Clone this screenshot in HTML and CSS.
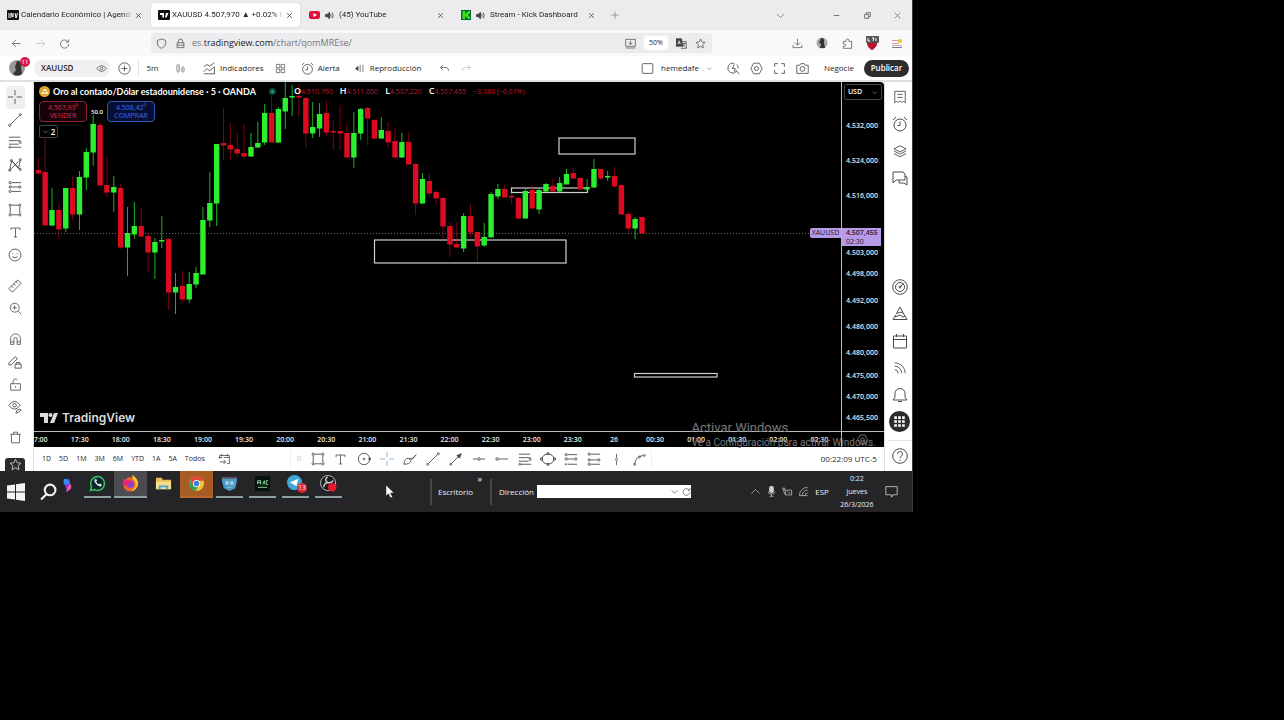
FILE: index.html
```html
<!DOCTYPE html>
<html lang="es">
<head>
<meta charset="utf-8">
<title>XAUUSD 4.507,970 ▲ +0.02%</title>
<link rel="stylesheet" href="styles.css">
</head>
<body>
<svg class="sprite" aria-hidden="true">
  <symbol id="x" viewBox="0 0 16 16"><path d="M4 4l8 8M12 4l-8 8"/></symbol>
  <symbol id="plus" viewBox="0 0 16 16"><path d="M8 3v10M3 8h10"/></symbol>
  <symbol id="down" viewBox="0 0 16 16"><path d="M3 6l5 5 5-5"/></symbol>
  <symbol id="up" viewBox="0 0 16 16"><path d="M2 11l6-6 6 6"/></symbol>
  <symbol id="min" viewBox="0 0 16 16"><path d="M3 8h10"/></symbol>
  <symbol id="restore" viewBox="0 0 16 16"><path d="M3 6h7v7H3zM6 6V3h7v7h-3"/></symbol>
  <symbol id="back" viewBox="0 0 16 16"><path d="M14 8H2M7 3L2 8l5 5"/></symbol>
  <symbol id="fwd" viewBox="0 0 16 16"><path d="M2 8h12M9 3l5 5-5 5"/></symbol>
  <symbol id="reload" viewBox="0 0 16 16"><path d="M13 5.500A6 6 0 1 0 14 9M14 2v4h-4"/></symbol>
  <symbol id="shield" viewBox="0 0 16 16"><path d="M8 1.500l6 2v4c0 4-3 6-6 7.500-3-1.500-6-3.500-6-7.500v-4z"/></symbol>
  <symbol id="lock" viewBox="0 0 16 16"><path d="M3 7h10v7H3zM5 7V4.500a3 3 0 0 1 6 0V7M3 10.500h10"/></symbol>
  <symbol id="sound" viewBox="0 0 16 16"><path class="solid" d="M1 6h3l4-4v12l-4-4H1z"/><path d="M10.500 5v6M13 3q3 5 0 10"/></symbol>
  <symbol id="install" viewBox="0 0 16 16"><path d="M1 2h14v10H1zM1 14.500h14M8 4v5M5.500 7l2.500 2.500L10.500 7"/></symbol>
  <symbol id="translate" viewBox="0 0 16 16"><path class="solid" d="M0 1h8l2 11H0z"/><path class="pale" d="M2.500 9L4.500 4l2 5M3 7.500h3"/><path d="M9 5h6v10H7M9.500 8h5M12 6.500V8c0 3-2 4-3 5M10 9c1 2 3 3 4 4"/></symbol>
  <symbol id="star" viewBox="0 0 16 16"><path d="M8 1.500l2 4.300 4.700.6-3.500 3.200.9 4.700L8 12l-4.100 2.300.9-4.700L1.300 6.400 6 5.800z"/></symbol>
  <symbol id="download" viewBox="0 0 16 16"><path d="M8 1v9M4 6.500l4 4 4-4M1.500 10v4h13v-4"/></symbol>
  <symbol id="puzzle" viewBox="0 0 16 16"><path d="M2 5h4V3.500a2 2 0 0 1 4 0V5h4v10H2v-3h1.500a1.700 1.700 0 0 0 0-3.500H2z"/></symbol>
  <symbol id="eye" viewBox="0 0 16 16"><path d="M1 8q7-8.500 14 0-7 8.500-14 0z"/><circle cx="8" cy="8" r="2"/></symbol>
  <symbol id="circleplus" viewBox="0 0 16 16"><circle cx="8" cy="8" r="7"/><path d="M8 4.500v7M4.500 8h7"/></symbol>
  <symbol id="bars" viewBox="0 0 16 16"><path d="M4.500 1v14M2.500 3h4v9h-4zM11.500 4v11M9.500 7h4v5h-4z"/></symbol>
  <symbol id="indic" viewBox="0 0 16 16"><path d="M1 6l4-3 3 2 6-4M1 14.500h14M1 12l4-4 3 3 6-5v8"/></symbol>
  <symbol id="grid4" viewBox="0 0 16 16"><path d="M2 2h5v5H2zM9 2h5v5H9zM2 9h5v5H2zM9 9h5v5H9z"/></symbol>
  <symbol id="alarm" viewBox="0 0 16 16"><circle cx="8" cy="9" r="6"/><path d="M8 5.500V9.500H5.500M1 4l3-3M15 4l-3-3"/></symbol>
  <symbol id="replay" viewBox="0 0 16 16"><path class="solid" d="M6 5v6L2 8z"/><path d="M9 3v10M13 3v10"/></symbol>
  <symbol id="undo" viewBox="0 0 16 16"><path d="M6 3L2 6.500 6 10M2 6.500h8q4 0 4 5"/></symbol>
  <symbol id="redo" viewBox="0 0 16 16"><path d="M10 3l4 3.500-4 3.500M14 6.500H6q-4 0-4 5"/></symbol>
  <symbol id="square" viewBox="0 0 16 16"><rect x="1.500" y="2" width="13" height="12" rx="1"/></symbol>
  <symbol id="quick" viewBox="0 0 16 16"><path d="M9 2A6 6 0 1 0 12 11M11 10l4 5M9 3L6.500 8H10l-1 4M12 3q2 2 1.500 5"/></symbol>
  <symbol id="hex" viewBox="0 0 16 16"><path d="M4.500 1.500h7L15 8l-3.500 6.500h-7L1 8z"/><circle cx="8" cy="8" r="2.500"/></symbol>
  <symbol id="full" viewBox="0 0 16 16"><path d="M2 6V2h4M10 2h4v4M14 10v4h-4M6 14H2v-4"/></symbol>
  <symbol id="camera" viewBox="0 0 16 16"><path d="M1 4h3.500L6 2h4l1.500 2H15v10H1z"/><circle cx="8" cy="8.500" r="3"/></symbol>
  <symbol id="cross" viewBox="0 0 16 16"><path d="M8 0v6M8 10v6M0 8h6M10 8h6"/></symbol>
  <symbol id="line" viewBox="0 0 16 16"><path d="M3 13L13 3"/><circle cx="2" cy="14" r="1.200"/><circle cx="14" cy="2" r="1.200"/></symbol>
  <symbol id="fib" viewBox="0 0 16 16"><path d="M1 2.500h13M1 6.500h13M1 10.500h11M3 14h12"/><circle cx="14" cy="8.500" r="1.200"/><circle cx="2" cy="14" r="1"/></symbol>
  <symbol id="pattern" viewBox="0 0 16 16"><path d="M2 14L4 3l8 9 2-10M2 14l10-10M4 3l10 10"/><circle cx="4" cy="3" r="1.200"/><circle cx="14" cy="2" r="1.200"/><circle cx="2" cy="14" r="1.200"/><circle cx="14" cy="13" r="1.200"/></symbol>
  <symbol id="forecast" viewBox="0 0 16 16"><path d="M4 3h11M4 8h8M4 13h11"/><circle cx="2.500" cy="3" r="1.300"/><circle cx="2.500" cy="8" r="1.300"/><circle cx="2.500" cy="13" r="1.300"/><circle cx="13.500" cy="8" r="1.300"/></symbol>
  <symbol id="long" viewBox="0 0 16 16"><path d="M4 3h11M4 8h8M4 14h11"/><circle cx="2.500" cy="3" r="1.300"/><circle cx="2.500" cy="8" r="1.300"/><circle cx="13.500" cy="8" r="1.300"/><circle cx="2" cy="14" r=".7"/></symbol>
  <symbol id="short" viewBox="0 0 16 16"><path d="M4 2.500h11M4 9h8M4 14h11"/><circle cx="2.500" cy="2.500" r="1.300"/><circle cx="2.500" cy="9" r="1.300"/><circle cx="13.500" cy="9" r="1.300"/><circle cx="2.500" cy="14" r="1.300"/></symbol>
  <symbol id="rect" viewBox="0 0 16 16"><path d="M4 2.500h8M4 13.500h8M2.500 4v8M13.500 4v8"/><circle cx="2.500" cy="2.500" r="1.300"/><circle cx="13.500" cy="2.500" r="1.300"/><circle cx="2.500" cy="13.500" r="1.300"/><circle cx="13.500" cy="13.500" r="1.300"/></symbol>
  <symbol id="text" viewBox="0 0 16 16"><path d="M2.500 5V2.500h11V5M8 2.500v11M6 13.500h4"/></symbol>
  <symbol id="smile" viewBox="0 0 16 16"><circle cx="8" cy="8" r="6.800"/><path d="M5.500 6v1M10.500 6v1M5 10q3 2.500 6 0"/></symbol>
  <symbol id="ruler" viewBox="0 0 16 16"><path d="M1 11L11 1l4 4L5 15zM4 8l2 2M6.500 5.500l2 2M9 3l2 2"/></symbol>
  <symbol id="zoom" viewBox="0 0 16 16"><circle cx="7" cy="7" r="5.500"/><path d="M11 11l4 4M7 4.500v5M4.500 7h5"/></symbol>
  <symbol id="magnet" viewBox="0 0 16 16"><path d="M2 14V7a6 6 0 0 1 12 0v7h-4V7.500a2 2 0 0 0-4 0V14zM2 11h4M10 11h4"/></symbol>
  <symbol id="penlock" viewBox="0 0 16 16"><path d="M1 9l7-7 3 2-7 7-3 .5zM8 10.500h7V15H8zM9.500 10.500V8.500h4v2"/></symbol>
  <symbol id="unlock" viewBox="0 0 16 16"><path d="M2 7h12v8H2zM5 7V4a3 3 0 0 1 5.500-1.500M8 10v2"/></symbol>
  <symbol id="eyepen" viewBox="0 0 16 16"><path d="M1 6q6.500-9 13 0-6.500 9-13 0z"/><circle cx="7.500" cy="6" r="2"/><path d="M9 15l1-3 3-1.500 2 1-3 2.500z"/></symbol>
  <symbol id="trash" viewBox="0 0 16 16"><path d="M1.500 4h13M3 4v10.500h10V4M5.500 4V1.500h5V4"/></symbol>
  <symbol id="watch" viewBox="0 0 16 16"><path d="M2 1.500h12v13l-2-2-2 2-2-2-2 2-2-2-2 2zM5 5h6M5 8.500h6"/></symbol>
  <symbol id="layers" viewBox="0 0 16 16"><path d="M8 2l7 3.500L8 9 1 5.500zM1 8l7 3.500L15 8M1 11l7 3.500 7-3.500"/></symbol>
  <symbol id="chat" viewBox="0 0 16 16"><path d="M1 13V2h10l2 2v6H4zM13 6l2 1v8l-3-2H7v-3"/></symbol>
  <symbol id="target" viewBox="0 0 16 16"><circle cx="8" cy="8" r="7.300"/><circle cx="8" cy="8" r="4.500"/><path d="M8 8l3.500-3.500"/><circle cx="8" cy="8" r="1"/></symbol>
  <symbol id="tree" viewBox="0 0 16 16"><path d="M8 1l3.500 6.500L9 6 4.500 7.500zM4 8.500L1 13.500h14l-3.500-6M3 11l5-2 3 2 2-1"/></symbol>
  <symbol id="cal" viewBox="0 0 16 16"><path d="M1.500 3h13v12h-13zM1.500 6.500h13M4.500 1v3M11.500 1v3"/></symbol>
  <symbol id="rss" viewBox="0 0 16 16"><path d="M2 2a12 12 0 0 1 12 12M2 6a8 8 0 0 1 8 8M2 10a4 4 0 0 1 4 4"/></symbol>
  <symbol id="bell" viewBox="0 0 16 16"><path d="M1 13h14l-2-3V6.500a5 5 0 0 0-10 0V10zM6 14.500h4"/></symbol>
  <symbol id="apps" viewBox="0 0 16 16"><circle class="solid" cx="8" cy="8" r="7.500"/><path class="dots" d="M4 4h2v2H4zM7 4h2v2H7zM10 4h2v2h-2zM4 7h2v2H4zM7 7h2v2H7zM10 7h2v2h-2zM4 10h2v2H4zM7 10h2v2H7zM10 10h2v2h-2z"/></symbol>
  <symbol id="help" viewBox="0 0 16 16"><circle cx="8" cy="8" r="7.300"/><path d="M5.500 6a2.500 2.500 0 1 1 3.500 2.300q-1 .5-1 1.700M8 11.500v1.300"/></symbol>
  <symbol id="goto" viewBox="0 0 16 16"><path d="M2 7V3h12v10h-3M1 5.500h4M7 5.500h7M4.500 1v3M11.500 1v3M2 11h7M7 8.500L9.500 11 7 13.500"/></symbol>
  <symbol id="circ" viewBox="0 0 16 16"><circle cx="8" cy="8" r="6.500"/><circle cx="8" cy="8" r="1"/><circle cx="14.500" cy="8" r="1.200"/></symbol>
  <symbol id="brush" viewBox="0 0 16 16"><path d="M1 14q1-7 5-7l3 3q-1 4-8 4zM7 7l4 1 4-5M9 9l6-6"/></symbol>
  <symbol id="arrow" viewBox="0 0 16 16"><path d="M2 14L12 4"/><path class="solid" d="M14 2l-2 5-3-3z"/><circle cx="2" cy="14" r="1"/></symbol>
  <symbol id="hline" viewBox="0 0 16 16"><path d="M1 8h5M10 8h5"/><circle cx="8" cy="8" r="1.500"/></symbol>
  <symbol id="hray" viewBox="0 0 16 16"><path d="M4 8h11"/><circle cx="2.500" cy="8" r="1.500"/></symbol>
  <symbol id="ellipse" viewBox="0 0 16 16"><ellipse cx="8" cy="8" rx="6" ry="5"/><circle cx="1.500" cy="8" r="1.200"/><circle cx="14.500" cy="8" r="1.200"/><circle cx="8" cy="2.500" r="1"/><circle cx="8" cy="13.500" r="1"/></symbol>
  <symbol id="vline" viewBox="0 0 16 16"><path d="M8 1v5M8 10v5"/><circle cx="8" cy="8" r="1.300"/></symbol>
  <symbol id="curve" viewBox="0 0 16 16"><path d="M2 14Q3 4 13 3"/><circle cx="2" cy="14" r="1.200"/><circle cx="8" cy="5" r="1.200"/><circle cx="14" cy="3" r="1.200"/></symbol>
</svg>

<div class="screen">
  <header class="tabs">
    <div class="tab"><svg class="fav" viewBox="0 0 12 10"><rect width="12" height="10" rx="1" fill="#111"/><path d="M2 3v5M4 8V3l2 4V3M8 3l1 5 1.500-5" stroke="#fff" fill="none"/></svg><span class="title">Calendario Económico | Agenda</span><button aria-label="Cerrar"><svg class="i s"><use href="#x"/></svg></button></div>
    <div class="tab active"><svg class="fav" viewBox="0 0 12 10"><rect width="12" height="10" rx="1" fill="#111"/><path d="M2 3h4v4.500H4.300V5H2zM8 3h2.500L8.500 7.500H7z" fill="#fff"/></svg><span class="title">XAUUSD 4.507,970 ▲ +0.02% h</span><button aria-label="Cerrar"><svg class="i s"><use href="#x"/></svg></button></div>
    <div class="tab"><svg class="fav" viewBox="0 0 12 10"><rect y="1" width="11" height="8" rx="2" fill="#e0103c"/><path d="M4.500 3v4L8 5z" fill="#fff"/></svg><svg class="i s"><use href="#sound"/></svg><span class="title">(45) YouTube</span><button aria-label="Cerrar"><svg class="i s"><use href="#x"/></svg></button></div>
    <div class="tab"><svg class="fav" viewBox="0 0 12 10"><rect x="1" width="10" height="10" fill="#063"/><path d="M2.500 1H5v2.500h1.500V2H8V1h2v2.500H8.500v3H10V9H8V8H6.500V6.500H5V9H2.500z" fill="#3ee21c"/></svg><svg class="i s"><use href="#sound"/></svg><span class="title">Stream - Kick Dashboard</span><button aria-label="Cerrar"><svg class="i s"><use href="#x"/></svg></button></div>
    <button class="newtab" aria-label="Nueva pestaña"><svg class="i"><use href="#plus"/></svg></button>
    <div class="window">
      <button class="list" aria-label="Lista de pestañas"><svg class="i m"><use href="#down"/></svg></button>
      <button aria-label="Minimizar"><svg class="i s"><use href="#min"/></svg></button>
      <button aria-label="Restaurar"><svg class="i s"><use href="#restore"/></svg></button>
      <button aria-label="Cerrar ventana"><svg class="i m"><use href="#x"/></svg></button>
    </div>
  </header>

  <nav class="nav">
    <div class="navleft">
      <button aria-label="Atrás"><svg class="i m"><use href="#back"/></svg></button>
      <button class="off" aria-label="Adelante"><svg class="i m"><use href="#fwd"/></svg></button>
      <button aria-label="Recargar"><svg class="i m"><use href="#reload"/></svg></button>
    </div>
    <div class="url">
      <svg class="i m"><use href="#shield"/></svg><svg class="i m"><use href="#lock"/></svg>
      <a class="address" href="#">es.<b>tradingview.com</b>/chart/qomMREse/</a>
      <svg class="i m"><use href="#install"/></svg><button class="percent">50%</button><svg class="i m"><use href="#translate"/></svg><svg class="i m"><use href="#star"/></svg>
    </div>
    <div class="navright">
      <button aria-label="Descargas"><svg class="i m"><use href="#download"/></svg></button>
      <button aria-label="Cuenta"><svg class="pic" viewBox="0 0 12 12"><circle cx="6" cy="6" r="5.500" fill="#aaa"/><path d="M5 1q4 0 3 5l1 5H4l1-4-2-1z" fill="#333"/></svg></button>
      <button aria-label="Extensiones"><svg class="i m"><use href="#puzzle"/></svg></button>
      <button aria-label="Bloqueador"><svg class="pic wide" viewBox="0 0 14 14"><path d="M2 3h10v5q-1 4-5 6-4-2-5-6z" fill="#b5122c"/><rect x="1" width="13" height="7" rx="1" fill="#555"/><path d="M3 2v3h2M7 2h2L8 5M11 2v3" stroke="#fff" fill="none"/></svg></button>
      <button aria-label="Menú"><svg class="pic" viewBox="0 0 12 12"><path d="M1 3.500h6M1 6.500h7" stroke="#d99" /><path d="M1 10.500h10" stroke="#77a"/><path d="M1 8.500h10" stroke="#ca8"/><circle cx="9" cy="4" r="2" fill="#f1bd2b"/></svg></button>
    </div>
  </nav>

  <div class="toolbar">
    <button class="avatar" aria-label="Perfil"><svg viewBox="0 0 16 16"><circle cx="8" cy="8" r="8" fill="#9a9a9a"/><path d="M8 1q5 0 4 6l1 7q-5 3-9 0l3-4-1-3z" fill="#333"/></svg><span class="badge">11</span></button>
    <div class="symbol"><button>XAUUSD</button><svg class="i m"><use href="#eye"/></svg></div>
    <button class="w28" aria-label="Comparar"><svg class="i l"><use href="#circleplus"/></svg></button>
    <button class="w28 ruled">5m</button>
    <button class="w28 faint" aria-label="Velas"><svg class="i m"><use href="#bars"/></svg></button>
    <button class="indicators"><svg class="i l"><use href="#indic"/></svg>Indicadores</button>
    <button aria-label="Plantillas"><svg class="i m"><use href="#grid4"/></svg></button>
    <button class="alert"><svg class="i l"><use href="#alarm"/></svg>Alerta</button>
    <button class="replay"><svg class="i m"><use href="#replay"/></svg>Reproducción</button>
    <button class="undo" aria-label="Deshacer"><svg class="i m"><use href="#undo"/></svg></button>
    <button class="undo off" aria-label="Rehacer"><svg class="i m"><use href="#redo"/></svg></button>
    <div class="toolright">
      <button class="layout"><svg class="i l"><use href="#square"/></svg>hemedafe<svg class="i xs"><use href="#down"/></svg></button>
      <button class="w23" aria-label="Buscar"><svg class="i l"><use href="#quick"/></svg></button>
      <button class="w23" aria-label="Ajustes"><svg class="i l"><use href="#hex"/></svg></button>
      <button class="w23" aria-label="Pantalla completa"><svg class="i l"><use href="#full"/></svg></button>
      <button class="w23" aria-label="Captura"><svg class="i l"><use href="#camera"/></svg></button>
      <button class="trade">Negocie</button>
      <button class="publish">Publicar</button>
    </div>
  </div>

  <main class="workspace">
    <aside class="rail left">
      <div class="set eight">
        <button class="on" aria-label="Cruz"><svg class="i xl"><use href="#cross"/></svg></button>
        <button aria-label="Línea"><svg class="i xl"><use href="#line"/></svg></button>
        <button aria-label="Fibonacci"><svg class="i xl"><use href="#fib"/></svg></button>
        <button aria-label="Patrones"><svg class="i xl"><use href="#pattern"/></svg></button>
        <button aria-label="Predicción"><svg class="i xl"><use href="#forecast"/></svg></button>
        <button aria-label="Formas"><svg class="i xl"><use href="#rect"/></svg></button>
        <button aria-label="Texto"><svg class="i l"><use href="#text"/></svg></button>
        <button aria-label="Iconos"><svg class="i xl"><use href="#smile"/></svg></button>
      </div>
      <div class="set two">
        <button aria-label="Medir"><svg class="i xl"><use href="#ruler"/></svg></button>
        <button aria-label="Acercar"><svg class="i l"><use href="#zoom"/></svg></button>
      </div>
      <div class="set four">
        <button aria-label="Imán"><svg class="i l"><use href="#magnet"/></svg></button>
        <button aria-label="Modo dibujo"><svg class="i xl"><use href="#penlock"/></svg></button>
        <button aria-label="Bloquear"><svg class="i l"><use href="#unlock"/></svg></button>
        <button aria-label="Ocultar"><svg class="i xl"><use href="#eyepen"/></svg></button>
      </div>
      <div class="set one"><button aria-label="Eliminar"><svg class="i l"><use href="#trash"/></svg></button></div>
      <button class="favs" aria-label="Favoritos"><svg class="i l"><use href="#star"/></svg></button>
    </aside>

    <section class="center">
      <div class="chart">
        <div class="plot">
          <svg id="plot" role="img" aria-label="Gráfico de velas XAUUSD"></svg>
          <div class="legend">
            <svg class="gold" viewBox="0 0 12 12"><circle cx="6" cy="6" r="6" fill="#e0a52c"/><path d="M2.500 8.500l1-2h2l1 2zM6.500 8.500l1-2h2l1 2zM4.500 5.500l1-2h2l1 2z" fill="#fff"/></svg>
            <h1>Oro al contado/Dólar estadounidense · 5 · OANDA</h1><span class="live"></span>
            <span class="ohlc"><span><b>O</b>4.510,760</span><span><b>H</b>4.511,050</span><span><b>L</b>4.507,220</span><span><b>C</b>4.507,455</span><span>−3,380 (−0,07%)</span></span>
          </div>
          <div class="deal">
            <button class="sell">4.507,93⁰<br>VENDER</button><span>50.0</span><button class="buy">4.508,42⁰<br>COMPRAR</button>
          </div>
          <button class="collapse"><svg class="i xs"><use href="#down"/></svg>2</button>
          <div class="brand"><svg viewBox="0 0 18 10"><path d="M0 0h8v10H4V4H0zM14 0h4l-4 10h-4z"/><circle cx="10.500" cy="2" r="2"/></svg>TradingView</div>
          <span class="ticker">XAUUSD</span>
        </div>
        <div class="scale">
          <svg id="scale"></svg>
          <button class="currency">USD<svg class="i xs"><use href="#down"/></svg></button>
          <div class="last">4.507,455<br><span>02:30</span></div>
        </div>
        <div class="times" id="times"></div>
        <button class="gear" aria-label="Ajustes de escala"><svg class="i m"><use href="#hex"/></svg></button>
      </div>
      <div class="ranges">
        <div class="periods"><button>1D</button><button>5D</button><button>1M</button><button>3M</button><button>6M</button><button>YTD</button><button>1A</button><button>5A</button><button>Todos</button><button class="go" aria-label="Ir a"><svg class="i l"><use href="#goto"/></svg></button></div>
        <div class="drawings">
          <span class="grip">⠿</span>
          <button aria-label="Rectángulo"><svg class="i xl"><use href="#rect"/></svg></button><button aria-label="Texto"><svg class="i l"><use href="#text"/></svg></button><button aria-label="Círculo"><svg class="i xl"><use href="#circ"/></svg></button><button class="blue" aria-label="Cruz"><svg class="i xl"><use href="#cross"/></svg></button><button aria-label="Pincel"><svg class="i xl"><use href="#brush"/></svg></button><button aria-label="Línea"><svg class="i xl"><use href="#line"/></svg></button><button aria-label="Flecha"><svg class="i xl"><use href="#arrow"/></svg></button><button aria-label="Línea horizontal"><svg class="i xl"><use href="#hline"/></svg></button><button aria-label="Rayo horizontal"><svg class="i xl"><use href="#hray"/></svg></button><button aria-label="Fibonacci"><svg class="i xl"><use href="#fib"/></svg></button><button aria-label="Elipse"><svg class="i xxl"><use href="#ellipse"/></svg></button><button aria-label="Posición larga"><svg class="i xl"><use href="#long"/></svg></button><button aria-label="Posición corta"><svg class="i xl"><use href="#short"/></svg></button><button aria-label="Línea vertical"><svg class="i l"><use href="#vline"/></svg></button><button aria-label="Curva"><svg class="i l"><use href="#curve"/></svg></button>
        </div>
        <span class="utc">00:22:09 UTC-5</span>
      </div>
      <div class="activate"><p>Activar Windows</p><p class="hint">Ve a Configuración para activar Windows.</p></div>
    </section>

    <aside class="rail right">
      <div class="wset">
        <button aria-label="Lista"><svg class="i xl"><use href="#watch"/></svg></button>
        <button aria-label="Alertas"><svg class="i xxl"><use href="#alarm"/></svg></button>
        <button aria-label="Capas"><svg class="i xl"><use href="#layers"/></svg></button>
        <button aria-label="Chats"><svg class="i xxl"><use href="#chat"/></svg></button>
      </div>
      <div class="wset low">
        <button aria-label="Filtros"><svg class="i xxl"><use href="#target"/></svg></button>
        <button aria-label="Pine"><svg class="i xxl"><use href="#tree"/></svg></button>
        <button aria-label="Calendario"><svg class="i xxl"><use href="#cal"/></svg></button>
        <button aria-label="Noticias"><svg class="i xl"><use href="#rss"/></svg></button>
        <button aria-label="Avisos"><svg class="i xxl"><use href="#bell"/></svg></button>
        <button aria-label="Productos"><svg class="i huge"><use href="#apps"/></svg></button>
      </div>
      <div class="wset foot"><button aria-label="Ayuda"><svg class="i xxl"><use href="#help"/></svg></button></div>
    </aside>
  </main>

  <footer class="taskbar">
    <button class="start" aria-label="Inicio"><svg viewBox="0 0 18 18"><path d="M0 2.500L8 1.500V8.500H0zM9 1.300L18 0v8.500H9zM0 9.500h8v7L0 15.500zM9 9.500h9V18l-9-1.300z" fill="#f4f4f4"/></svg></button>
    <button class="find" aria-label="Buscar"><svg viewBox="0 0 16 16"><circle cx="9.500" cy="6.500" r="5" /><path d="M6 10.500L1 15.500"/></svg></button>
    <svg class="copilot" viewBox="0 0 12 16"><path d="M2 1h5q2 1 2 5l1 5-5 4Q5 9 2 6z" fill="#7a3be0"/><path d="M2 1h4l2 5-5 1Q1 4 2 1z" fill="#2a90f0"/><path d="M8 6q4 2 1 6l-4 3q0-5 3-9z" fill="#e8569a"/></svg>
    <div class="apps">
      <button aria-label="WhatsApp"><svg viewBox="0 0 18 18"><path d="M1.500 16.500l1.200-4A7.300 7.300 0 1 1 5.800 15.500z" fill="#123" stroke="#35c564" stroke-width="1.600"/><path d="M6 5q-1 2 2 5t5 2l.5-2-2-1-1 1q-2-1-3-3l1-1-1-2z" fill="#d7f5df"/></svg></button>
      <button class="lit" aria-label="Firefox"><svg viewBox="0 0 18 18"><path d="M2 4q1 1 2 1 2-3 5-3l2 2q1-2 0-4 6 4 6 9a8 8 0 0 1-16 1Q1 7 2 4z" fill="#f0622b"/><path d="M11 0q6 4 6 9a8 8 0 0 1-8 8q7-4 5-9-1-3-3-4z" fill="#fcc42d"/><circle cx="8.500" cy="9.500" r="4" fill="#8a3fd4"/><path d="M2 4q1 1 2 1l5 1 1 2-4 2q-4 1-5 3Q0 8 2 4z" fill="#e5276f"/></svg></button>
      <button class="idle" aria-label="Explorador"><svg viewBox="0 0 18 18"><path d="M1 3h6l1 2h9v10H1z" fill="#eabf52"/><path d="M1 7h16v8H1z" fill="#f8dd8a"/><path d="M4 11h10v4h-2v-2H6v2H4z" fill="#48a5dc"/></svg></button>
      <button class="hot" aria-label="Chrome"><svg viewBox="0 0 18 18"><circle cx="9" cy="9" r="8" fill="#f3c336"/><path d="M2 5a8 8 0 0 1 14.500 1H9L5.500 11z" fill="#e14a38"/><path d="M2 5l4 7 4 1-2 4A8 8 0 0 1 2 5z" fill="#36a052"/><circle cx="9" cy="9" r="3.800" fill="#fff"/><circle cx="9" cy="9" r="3" fill="#397fe2"/></svg></button>
      <button aria-label="Bot"><svg viewBox="0 0 18 18"><path d="M1 2h16v4l-2 8-6 3-6-3L1 6z" fill="#4f9ac3"/><path d="M1 2h16v2H1z" fill="#556"/><path d="M5 7h3v3H5zM10 7h3v3h-3zM6 13h6" fill="#8fcdea" stroke="#bfe6f7" stroke-width=".5"/></svg></button>
      <button aria-label="Consola"><svg viewBox="0 0 18 18"><path d="M1 1h16v16H1z" fill="#07120b"/><path d="M4 10V6h3v4M4 8h3M9 10l2-4v4M15 6h-2v4h2M4 13h10" stroke="#8fd8a0" fill="none"/></svg></button>
      <button aria-label="Telegram"><svg viewBox="0 0 18 18"><circle cx="8" cy="8" r="8" fill="#3fa6dc"/><path d="M3 8l9-4-2 8-3-2z" fill="#fff"/></svg><span class="count">13</span></button>
      <button aria-label="OBS"><svg viewBox="0 0 18 18"><circle cx="8.500" cy="8.500" r="8" fill="#1c1c1e" stroke="#bbb"/><path d="M8 2q-4 3 0 6 4 1 6-2M8 8q-4 1-4 5" stroke="#ccc" stroke-width="1.500" fill="none"/><circle cx="13" cy="13" r="4.500" fill="#e5182c"/></svg></button>
    </div>
    <svg class="pointer" viewBox="0 0 8 14"><path d="M0 0v11l2.500-2.200L4.500 13l2-1-2-4H8z" fill="#fff" stroke="#222" stroke-width=".5"/></svg>
    <div class="desk"><span>Escritorio</span><sup>»</sup></div>
    <div class="dir"><label for="dir">Dirección</label><span class="field"><input id="dir" type="text"><svg class="i s"><use href="#down"/></svg><svg class="i s"><use href="#reload"/></svg></span></div>
    <div class="tray">
      <svg class="i m"><use href="#up"/></svg>
      <svg class="i m" viewBox="0 0 16 16"><rect class="solid" x="5" y="0" width="6" height="10" rx="3"/><path d="M3 8q0 4 5 4t5-4M8 12v3M5 15h6"/></svg>
      <svg class="i m" viewBox="0 0 16 16"><path d="M5 6h9v7H5zM1 3l3 9M1 3h3v4M8 8l4 3"/></svg>
      <svg class="i m" viewBox="0 0 16 16"><path d="M2 14A12 12 0 0 1 14 2M6 14a8 8 0 0 1 8-8M10 14a4 4 0 0 1 4-4M2 14h12"/></svg>
      <span class="lang">ESP</span>
      <time class="clock">0:22<br>jueves<br>26/3/2026</time>
      <svg class="i l" viewBox="0 0 16 16"><path d="M1 2h14v10h-5l-2 3v-3H1z"/></svg>
    </div>
  </footer>
</div>
<script src="chart.js"></script>
</body>
</html>
```
FILE: styles.css
```css
* { box-sizing: border-box; }
body { margin: 0; background: #000; font: 8px/12px "Open Sans", "Noto Sans", sans-serif; color: #26262a; }
button { border: 0; padding: 0; margin: 0; background: none; color: inherit; font: inherit; display: flex; align-items: center; justify-content: center; white-space: nowrap; }
p, h1 { margin: 0; }
.sprite { position: absolute; width: 0; height: 0; }
.screen { width: 71.1%; border-right: 1px solid #3a3a3c; position: relative; }

.i { width: 12px; height: 12px; flex: none; fill: none; stroke: currentColor; stroke-width: 1; opacity: .85; }
.i.xs { width: 7px; height: 7px; }
.i.s { width: 9px; height: 9px; stroke-width: 1.5; }
.i.m { width: 11px; height: 11px; }
.i.l { width: 13px; height: 13px; }
.i.xl { width: 14px; height: 14px; }
.i.xxl { width: 16px; height: 16px; }
.i.huge { width: 21px; height: 21px; opacity: 1; }
.solid { fill: currentColor; }
.pale { stroke: #fff; }
.dots { fill: #fff; stroke: none; }

.tabs { display: flex; align-items: center; height: 30px; background: #ececee; font-family: Roboto, "Open Sans", sans-serif; }
.tab { display: flex; align-items: center; gap: 2px; flex: 0 1 149px; height: 24px; margin: 0 2px 0 0; padding: 0 6px 0 7px; min-width: 0; border-radius: 4px; }
.tab.active { background: #fff; box-shadow: 0 0 2px #ccc; }
.fav { width: 12px; height: 10px; flex: none; }
.fav + .i { margin: 0 3px 0 2px; }
.title { flex: 1; overflow: hidden; white-space: nowrap; mask-image: linear-gradient(90deg, #000 92%, transparent); }
.newtab { width: 22px; color: #777; }
.window { display: flex; margin-left: auto; color: #444; }
.window button { width: 31px; }
.window .list { margin-right: 25px; }
.window button:last-child { width: 29px; }

.nav { display: flex; align-items: center; height: 26px; background: #f9f9fb; }
.navleft { display: flex; flex: 0 0 151px; padding-left: 4px; }
.navleft button { width: 24px; }
.off { color: #aaa; }
.url { flex: 1 1 560px; display: flex; align-items: center; gap: 8px; height: 20px; padding: 0 6px 0 5px; background: #ececee; border-radius: 4px; }
.address { flex: 1; color: #77777b; text-decoration: none; font-size: 9px; margin-left: -2px; }
.address b { color: #222; font-weight: 500; }
.percent { background: #fff; border-radius: 3px; width: 24px; height: 14px; font-size: 7px; }
.navright { display: flex; flex: none; margin-left: 73px; padding-right: 2px; }
.navright button { width: 25px; }
.pic { width: 12px; height: 12px; }
.pic.wide { width: 14px; height: 14px; }

.toolbar { display: flex; align-items: center; height: 26px; background: #fff; border-bottom: 2px solid #dfe0e3; font-weight: 500; }
.avatar { width: 34px; position: relative; }
.avatar svg { width: 16px; height: 16px; }
.badge { position: absolute; left: 20px; top: -3px; width: 10px; height: 10px; border-radius: 5px; background: #d81b45; color: #fff; font-size: 6px; line-height: 10px; text-align: center; }
.symbol { display: flex; align-items: center; justify-content: space-between; width: 76px; height: 17px; padding: 0 3px 0 7px; border-radius: 8px; background: #f0f0f2; font-weight: 600; }
.w28 { width: 28px; height: 16px; }
.faint { color: #77777b; }
.ruled { border-left: 1px solid #e3e3e6; }
.indicators { gap: 4px; margin: 0 11px 0 9px; }
.alert { gap: 4px; margin: 0 14px 0 15px; }
.replay { gap: 5px; margin-right: 12px; }
.undo { width: 22px; }
.toolright { display: flex; align-items: center; margin-left: auto; padding-right: 3px; }
.layout { gap: 7px; margin-right: 9px; }
.w23 { width: 23px; }
.trade { width: 50px; }
.publish { width: 45px; height: 17px; border-radius: 9px; background: #2d2d30; color: #fff; font-weight: 600; }

.workspace { display: flex; background: #fff; }
.rail { display: flex; flex-direction: column; flex: none; color: #2c2c30; }
.left { width: 34px; padding-top: 4px; padding-right: 3px; border-right: 1px solid #ddd; }
.set { display: flex; flex-direction: column; align-items: center; }
.set button { flex: 1; width: 19px; border-radius: 3px; }
.set .on { background: #efeff1; }
.eight { height: 180px; }
.two { height: 45px; margin-top: 9px; }
.four { height: 90px; margin-top: 8px; }
.one { height: 23px; margin-top: 8px; }
.favs { height: 13px; width: 20px; margin: 9px auto 0; border-radius: 3px 3px 0 0; background: #2b2b2e; color: #fff; align-items: flex-start; overflow: hidden; }
.right { width: 28px; padding: 1px 0 0 3px; border-left: 1px solid #ddd; }
.wset { display: flex; flex-direction: column; }
.wset button { height: 27px; }
.low { margin-top: auto; }
.foot { margin-top: 5px; padding: 1px 0 2px; border-top: 1px solid #e3e3e6; }

.center { flex: 1; min-width: 0; position: relative; }
.chart { display: grid; grid-template-columns: 1fr 43px; background: #000; color: #fff; border-radius: 0 4px 0 0; overflow: hidden; }
.plot, .scale { position: relative; height: 349px; overflow: hidden; }
.scale { border-left: 1px solid #bbb; }
.plot > svg:first-child, .scale > svg { display: block; width: 100%; height: 349px; }
.scale text { fill: #e4e4e4; font-size: 7px; font-weight: 600; text-anchor: middle; }
.green { fill: #2bef2f; }
.red { fill: #dc0b22; }
.wick.green { opacity: .75; }
.wick.red { opacity: .55; }
.zone { fill: none; stroke: #d0d0d0; stroke-width: 1.2; }
.level { stroke: #666; stroke-dasharray: 1 2; }
.legend { position: absolute; left: 5px; top: 3px; display: flex; align-items: center; white-space: nowrap; }
.gold { width: 11px; height: 11px; margin-right: 3px; }
.legend h1 { font: 700 9px/12px Lato, "Open Sans", sans-serif; }
.live { width: 7px; height: 7px; border: 2px solid #0c4a3c; border-radius: 4px; background: #2aa187; margin: 0 18px 0 13px; }
.ohlc { display: flex; align-items: baseline; gap: 7px; color: #c4142a; font-size: 7px; }
.ohlc b { color: #fff; font-size: 9px; font-weight: 600; }
.deal { position: absolute; left: 5px; top: 19px; display: flex; align-items: center; gap: 4px; font-size: 6px; font-weight: 600; }
.deal button { width: 48px; height: 21px; border: 1px solid; border-radius: 4px; font-size: 7px; line-height: 8px; font-weight: 400; }
.deal .sell { color: #e02743; border-color: #8d2335; background: #16040a; }
.deal .buy { color: #4268f0; border-color: #3455b5; background: #071033; }
.collapse { position: absolute; left: 5px; top: 43px; width: 19px; height: 13px; gap: 2px; border: 1px solid #444; border-radius: 2px; font-weight: 600; }
.brand { position: absolute; left: 6px; bottom: 5px; display: flex; align-items: center; gap: 4px; color: #dcdcdc; font: 600 12px/16px Inter, "Open Sans", sans-serif; }
.brand svg { width: 18px; height: 10px; fill: currentColor; }
.ticker { position: absolute; right: 0; top: 146px; width: 31px; height: 10px; background: #b79be6; color: #22143c; font-size: 7px; line-height: 10px; text-align: center; border-radius: 2px 0 0 2px; }
.currency { position: absolute; left: 2px; top: 2px; width: 38px; height: 16px; padding: 0 3px; justify-content: space-between; border: 1px solid #444; border-radius: 2px; font-size: 7px; font-weight: 600; }
.last { position: absolute; left: 0; top: 146px; width: 39px; height: 18px; padding-left: 4px; background: #b79be6; color: #22143c; font-size: 7px; line-height: 9px; font-weight: 600; }
.last span { font-weight: 400; }
.times { display: flex; justify-content: flex-end; overflow: hidden; height: 16px; padding-right: 1px; border-top: 1px solid #bbb; }
.times span { flex: 0 0 5.1%; text-align: center; font-size: 7px; line-height: 15px; font-weight: 600; color: #e8e8e8; }
.gear { border-top: 1px solid #bbb; border-left: 1px solid #bbb; color: #bbb; }

.ranges { display: flex; align-items: center; height: 24px; font-weight: 500; }
.periods { display: flex; gap: 8px; flex: 0 0 256px; padding-left: 8px; font-size: 7px; }
.go { margin-left: 5px; }
.drawings { display: flex; align-items: center; border-left: 1px solid #eee; border-right: 1px solid #eee; height: 18px; color: #2c2c30; }
.drawings button { width: 23px; }
.drawings .blue { color: #6f9dbb; }
.grip { width: 15px; text-align: center; color: #ccc; }
.utc { margin-left: auto; padding-right: 7px; white-space: nowrap; }
.activate { position: absolute; right: 8px; top: 337px; color: #79797c; white-space: nowrap; pointer-events: none; font-family: Roboto, "Open Sans", sans-serif; }
.activate p { font-size: 13px; line-height: 17px; }
.activate .hint { font-size: 10px; line-height: 13px; }

.taskbar { position: relative; display: flex; align-items: center; height: 41px; background: #252528; color: #eee; }
.start { margin-left: 7px; }
.start svg { width: 18px; height: 18px; }
.find { margin-left: 15px; }
.find svg { width: 17px; height: 17px; fill: none; stroke: #f2f2f2; stroke-width: 2; }
.copilot { width: 11px; height: 15px; margin: 0 8px 12px 5px; }
.apps { display: flex; align-self: flex-start; }
.apps button { width: 33px; height: 27px; position: relative; border-bottom: 2px solid #8ba0a3; }
.apps button:not(.lit):not(.hot) { width: 27px; margin: 0 3px; }
.apps svg { width: 17px; height: 17px; }
.apps .idle { border-color: transparent; }
.apps .lit { background: #4b4b50; }
.apps .hot { background: #a75c23; border-color: #b9672a; }
.count { position: absolute; right: 2px; bottom: 3px; width: 10px; height: 10px; border-radius: 5px; background: #dd2738; font-size: 7px; line-height: 10px; text-align: center; }
.pointer { position: absolute; left: 386px; top: 14px; width: 8px; height: 14px; }
.desk { display: flex; align-items: center; justify-content: space-between; height: 26px; width: 62px; margin-left: 85px; padding: 0 8px 0 6px; border-left: 2px solid #47474b; border-right: 2px solid #47474b; }
.desk sup { align-self: flex-start; line-height: 0; font-size: 9px; }
.dir { display: flex; align-items: center; gap: 3px; padding-left: 7px; }
.field { display: flex; align-items: center; height: 13px; width: 154px; background: #fff; color: #555; gap: 3px; }
.field input { flex: 1; min-width: 0; border: 0; padding: 0; height: 11px; background: none; font: inherit; }
.tray { display: flex; align-items: center; gap: 5px; margin-left: auto; padding-right: 14px; font-size: 7px; }
.lang { font-size: 8px; margin-left: 1px; }
.clock { width: 46px; line-height: 13px; text-align: center; }
```
FILE: chart.js
```js
const NS = "http://www.w3.org/2000/svg";
const LEFT = 34, TOP = 82;

// colour, high, open/close top, open/close bottom, low
const candles = `r158,170,173,174 r137,172,225,225 g188,210,225,226 r203,210,229,239 g188,188,228,232 r177,188,214,220
g171,177,214,230 g148,152,177,190 g115,124,152,166 r123,125,185,186 r157,185,192,197 g176,187,192,212
r184,188,247,249 g207,233,247,276 g202,226,234,239 r208,226,236,237 r233,236,252,272 g238,242,252,279
g216,240,241,248 r238,239,292,310 g273,287,292,314 r271,286,299,302 g272,284,299,303 g267,273,284,288
g207,220,274,274 g172,203,220,227 g144,144,203,226 r108,143,145,160 r123,145,149,160 r132,149,153,157
r124,153,156,159 g133,147,156,157 g122,143,147,148 g104,113,142,145 r96,113,142,142 g107,109,142,143
g82,98,111,129 g85,96,97,116 r84,96,97,117 r97,98,133,147 g102,127,133,138 g103,114,128,137
r101,113,132,137 r120,131,132,150 r105,131,133,150 r123,133,157,158 g112,133,157,168 g108,109,133,140
r107,108,118,145 r119,120,138,139 g117,130,138,139 r122,131,142,148 r128,141,157,158 g133,142,157,158
r132,142,164,165 r163,164,203,215 g173,179,203,204 r174,181,193,197 r190,192,198,205 r197,198,226,238
r222,226,244,257 r222,244,247,248 g213,216,248,252 r204,216,232,237 r231,232,246,262 g223,237,245,247
g192,194,237,237 g184,189,196,199 r185,189,197,197 r193,196,197,204 r197,198,218,219 g188,191,218,219
r185,190,208,209 g188,190,209,214 g183,184,191,192 r179,186,191,191 g177,183,191,193 g169,174,184,184
r167,173,178,179 r177,178,189,189 g179,187,189,191 g159,169,187,188 r169,169,178,180 g171,176,177,181
r167,176,186,187 r184,185,214,215 r212,214,228,233 g217,219,228,239 r217,217,233,234`.split(/\s+/);

function add(parent, tag, attrs, text) {
  const el = document.createElementNS(NS, tag);
  for (const key in attrs) el.setAttribute(key, attrs[key]);
  if (text) el.textContent = text;
  parent.appendChild(el);
}

const plot = document.getElementById("plot");
add(plot, "line", { class: "level", x1: 0, x2: "100%", y1: 151.5, y2: 151.5 });
[[374.5, 240, 191.5, 23], [559, 138, 76, 16], [511.5, 188, 76, 4.5], [634.5, 373.5, 82.5, 3.5]].forEach(([x, y, width, height]) =>
  add(plot, "rect", { class: "zone", x: x - LEFT, y: y - TOP, width, height }));
candles.forEach((c, i) => {
  const colour = c[0] === "r" ? "red" : "green";
  const [high, top, bottom, low] = c.slice(1).split(",").map(Number);
  const x = 38.3 + 6.86 * i - LEFT;
  add(plot, "rect", { class: "wick " + colour, x: x - 0.5, y: high - TOP, width: 1, height: low - high });
  add(plot, "rect", { class: colour, x: x - 2.7, y: top - TOP, width: 5.4, height: bottom - top + 0.5 });
});

const scale = document.getElementById("scale");
[["4.532,000", 125], ["4.524,000", 160], ["4.516,000", 195], ["4.508,000", 230], ["4.503,000", 252], ["4.498,000", 273],
 ["4.492,000", 300], ["4.486,000", 326], ["4.480,000", 352], ["4.475,000", 375], ["4.470,000", 396], ["4.465,500", 417]]
  .forEach(([label, y]) => add(scale, "text", { x: 20, y: y - TOP + 3 }, label));

const times = document.getElementById("times");
"17:00 17:30 18:00 18:30 19:00 19:30 20:00 20:30 21:00 21:30 22:00 22:30 23:00 23:30 26 00:30 01:00 01:30 02:00 02:30"
  .split(" ").forEach(t => {
    const span = document.createElement("span");
    span.textContent = t;
    times.appendChild(span);
  });
```
